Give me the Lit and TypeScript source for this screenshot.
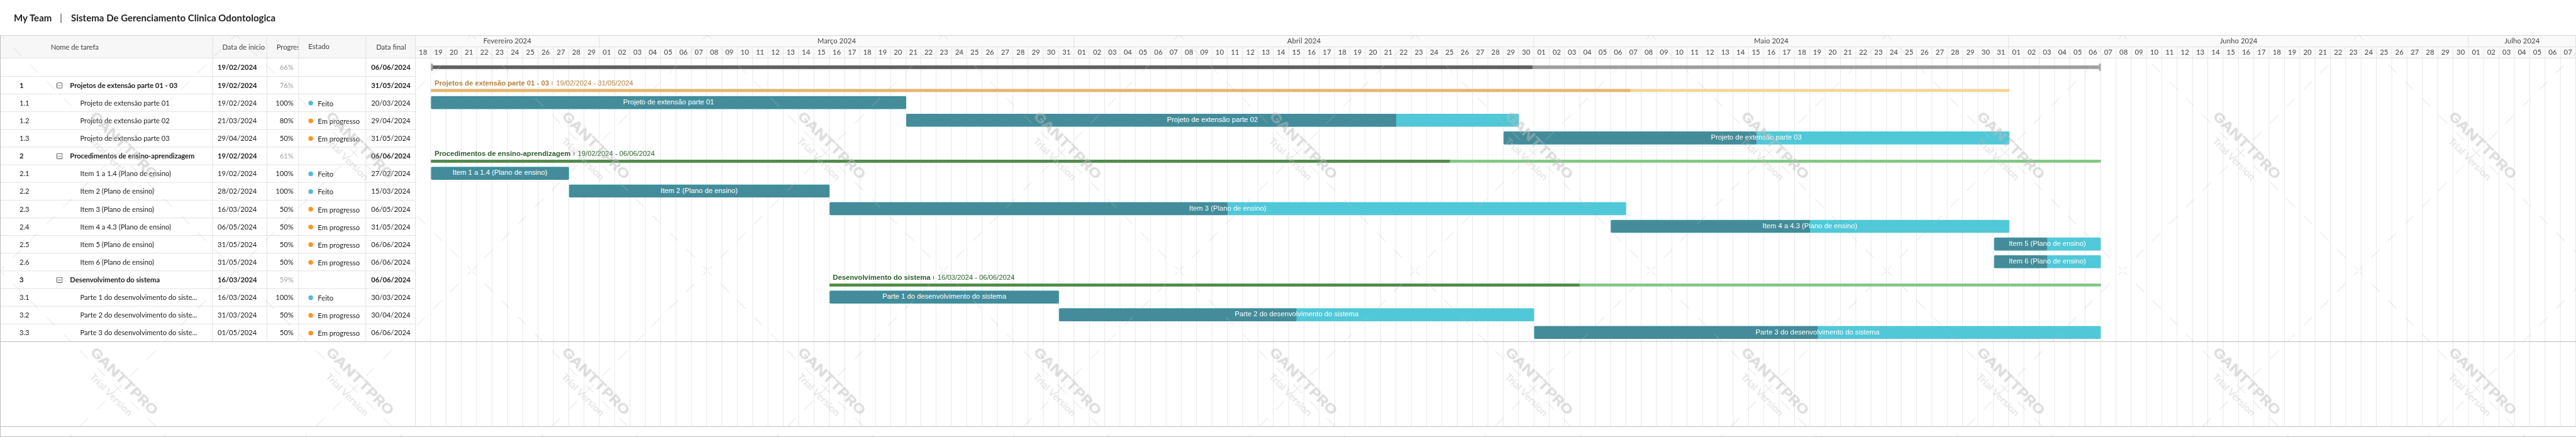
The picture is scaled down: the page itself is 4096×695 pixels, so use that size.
import { LitElement, html, svg, css, nothing } from "lit";
import { customElement } from "lit/decorators.js";
import { classMap } from "lit/directives/class-map.js";
import { styleMap } from "lit/directives/style-map.js";

type Kind = "root" | "group" | "task";
interface Row {
  kind: Kind;
  num: string;
  name: string;
  full?: string;
  start: string;
  end: string;
  progress: number;
  tone?: "orange" | "green";
}

const g = (num: string, name: string, start: string, end: string, progress: number, tone: "orange" | "green"): Row =>
  ({ kind: "group", num, name, start, end, progress, tone });
const t = (num: string, name: string, start: string, end: string, progress: number, full?: string): Row =>
  ({ kind: "task", num, name, start, end, progress, full });

const ROWS: Row[] = [
  { kind: "root", num: "", name: "", start: "19/02/2024", end: "06/06/2024", progress: 66 },
  g("1", "Projetos de extensão parte 01 - 03", "19/02/2024", "31/05/2024", 76, "orange"),
  t("1.1", "Projeto de extensão parte 01", "19/02/2024", "20/03/2024", 100),
  t("1.2", "Projeto de extensão parte 02", "21/03/2024", "29/04/2024", 80),
  t("1.3", "Projeto de extensão parte 03", "29/04/2024", "31/05/2024", 50),
  g("2", "Procedimentos de ensino-aprendizagem", "19/02/2024", "06/06/2024", 61, "green"),
  t("2.1", "Item 1 a 1.4 (Plano de ensino)", "19/02/2024", "27/02/2024", 100),
  t("2.2", "Item 2 (Plano de ensino)", "28/02/2024", "15/03/2024", 100),
  t("2.3", "Item 3 (Plano de ensino)", "16/03/2024", "06/05/2024", 50),
  t("2.4", "Item 4 a 4.3 (Plano de ensino)", "06/05/2024", "31/05/2024", 50),
  t("2.5", "Item 5 (Plano de ensino)", "31/05/2024", "06/06/2024", 50),
  t("2.6", "Item 6 (Plano de ensino)", "31/05/2024", "06/06/2024", 50),
  g("3", "Desenvolvimento do sistema", "16/03/2024", "06/06/2024", 59, "green"),
  t("3.1", "Parte 1 do desenvolvimento do siste...", "16/03/2024", "30/03/2024", 100, "Parte 1 do desenvolvimento do sistema"),
  t("3.2", "Parte 2 do desenvolvimento do siste...", "31/03/2024", "30/04/2024", 50, "Parte 2 do desenvolvimento do sistema"),
  t("3.3", "Parte 3 do desenvolvimento do siste...", "01/05/2024", "06/06/2024", 50, "Parte 3 do desenvolvimento do sistema"),
];

const MONTHS = [
  { label: "Fevereiro 2024", from: 18, to: 29 },
  { label: "Março 2024", from: 1, to: 31 },
  { label: "Abril 2024", from: 1, to: 30 },
  { label: "Maio 2024", from: 1, to: 31 },
  { label: "Junho 2024", from: 1, to: 30 },
  { label: "Julho 2024", from: 1, to: 7 },
];
const DAYS = MONTHS.flatMap((m) =>
  Array.from({ length: m.to - m.from + 1 }, (_, i) => String(m.from + i).padStart(2, "0")),
);
const CHART_WIDTH = 3664;
const DAY = CHART_WIDTH / DAYS.length;
const ORIGIN = Date.UTC(2024, 1, 18);

const dayIndex = (date: string) => {
  const [d, m, y] = date.split("/").map(Number);
  return Math.round((Date.UTC(y, m - 1, d) - ORIGIN) / 86400000);
};
// A bar covers its end date in full.
const span = (row: Row) => {
  const from = dayIndex(row.start);
  const to = dayIndex(row.end) + 1;
  return { left: from * DAY, width: (to - from) * DAY };
};

@customElement("task-table")
export class TaskTable extends LitElement {
  static styles = css`
    :host {
      display: block;
      width: 704px;
      font: 12px/16px Lato, sans-serif;
      color: #222;
    }
    .row {
      display: grid;
      grid-template-columns: 360px 92px 54px 114px 84px;
      height: 30px;
    }
    .row.root { height: 31px; }
    .row.head { height: 38px; background: #f7f7f7; color: #444; }
    .cell {
      display: flex;
      align-items: center;
      box-sizing: border-box;
      border-right: 1px solid #e0e0e0;
      border-bottom: 1px solid #e0e0e0;
      overflow: hidden;
      white-space: nowrap;
    }
    .row.last .cell { border-bottom-color: #b8b8b8; }
    .num { width: 62.8px; padding-left: 32px; }
    .toggle { display: block; width: 10px; height: 10px; margin-right: 13px; padding-top: 1px; }
    .indent { width: 40.2px; }
    .group .cell, .root .cell { font-weight: 700; }
    .group .name { letter-spacing: -0.06px; }
    .task .name { letter-spacing: -0.03px; }
    .start { padding-left: 8px; }
    .end { padding-left: 8.5px; }
    .pct { justify-content: flex-end; padding-right: 8px; }
    .group .pct, .root .pct { font-weight: 400; color: #a0a0a0; }
    .status { padding-left: 16px; }
    .dot {
      width: 8px;
      height: 8px;
      border-radius: 50%;
      background: #ff9620;
      margin-right: 8px;
    }
    .dot.done { background: #52bcd4; }
    .status span { padding-top: 2px; }
    .head .cell { padding-left: 16px; }
    .head .cell:first-child { padding-left: 85px; letter-spacing: -0.05px; }
    .head .status { padding-bottom: 2px; }
    .head .cell:last-child { padding-left: 17px; }
    .rest { height: 143px; border-right: 1px solid #e0e0e0; box-sizing: border-box; }
  `;
  render() {
    return html`
      <div class="row head">
        <div class="cell">Nome de tarefa</div>
        <div class="cell">Data de início</div>
        <div class="cell">Progresso</div>
        <div class="cell status">Estado</div>
        <div class="cell">Data final</div>
      </div>
      ${ROWS.map(
        (r, i) => html`<div class=${classMap({ row: true, [r.kind]: true, last: i === ROWS.length - 1 })}>
          <div class="cell">
            <div class="num">${r.num}</div>
            ${r.kind === "group"
              ? html`<svg class="toggle" viewBox="0 0 10 10">
                  <rect x="0.5" y="0.5" width="9" height="9" rx="1" fill="none" stroke="#333" />
                  <path d="M2.7 5h4.6" stroke="#888" stroke-width="1.2" />
                </svg>`
              : html`<div class="indent"></div>`}
            <div class="name">${r.name}</div>
          </div>
          <div class="cell start">${r.start}</div>
          <div class="cell pct">${r.progress}%</div>
          <div class="cell status">
            ${r.kind === "task"
              ? html`<div class=${classMap({ dot: true, done: r.progress === 100 })}></div>
                  <span>${r.progress === 100 ? "Feito" : "Em progresso"}</span>`
              : nothing}
          </div>
          <div class="cell end">${r.end}</div>
        </div>`,
      )}
      <div class="rest"></div>
    `;
  }
}

@customElement("gantt-chart")
export class GanttChart extends LitElement {
  static styles = css`
    :host {
      display: block;
      width: 3664px;
      font: 12px/16px Lato, sans-serif;
      color: #444;
    }
    .months, .days { display: flex; box-sizing: border-box; height: 19px; background: #fafafa; }
    .months > div, .days > div {
      box-sizing: border-box;
      display: flex;
      align-items: center;
      justify-content: center;
      border-right: 1px solid #e0e0e0;
      border-bottom: 1px solid #e0e0e0;
      min-width: 0;
      letter-spacing: 0.1px;
    }
    .days > div { flex: 1 1 0; border-right-color: #e8e8e8; }
    .body { display: grid; height: 624px; }
    .columns, .rows { grid-area: 1 / 1; }
    .columns { display: flex; }
    .columns > div { flex: 1 1 0; box-sizing: border-box; border-right: 1px solid #e6e6e6; }
    .row {
      height: 30px;
      box-sizing: border-box;
      font: 12px/20px "Liberation Sans", Arial, sans-serif;
      white-space: nowrap;
    }
    .row.root { height: 31px; padding-top: 9px; }
    .row.last { border-bottom: 1px solid #b8b8b8; }
    .row.task { padding-top: 3px; }
    .summary {
      display: flex;
      align-items: center;
      box-sizing: border-box;
      height: 12px;
      border: solid #9e9e9e;
      border-width: 0 3px;
    }
    .summary .track { flex: 1; height: 6px; background: #9e9e9e; }
    .summary .fill { height: 6px; background: #616161; }
    .label { display: flex; align-items: center; height: 21px; line-height: 22px; padding-left: 6px; }
    .label b { font-weight: 700; }
    .label i { width: 1px; height: 6px; margin: 0 6px 0 5px; background: currentColor; }
    .line { height: 5px; }
    .line div { height: 5px; }
    .orange { color: #b5823c; }
    .orange .line { background: #fad394; }
    .orange .line div { background: #e6b570; }
    .green { color: #2c5f2e; }
    .green .line { background: #81c784; }
    .green .line div { background: #528a4c; }
    .bar {
      display: grid;
      height: 22px;
      border-radius: 2px;
      background: #50c8d8;
      overflow: hidden;
      color: #fff;
    }
    .bar div { grid-area: 1 / 1; }
    .bar .done { background: #448c9a; border-radius: 2px; }
    .bar .text { text-align: center; }
  `;
  private content(r: Row) {
    const { left, width } = span(r);
    const box = styleMap({ marginLeft: `${left}px`, width: `${width}px` });
    const done = styleMap({ width: `${r.progress}%` });
    if (r.kind === "root")
      return html`<div class="summary" style=${box}>
        <div class="track"><div class="fill" style=${done}></div></div>
      </div>`;
    if (r.kind === "group")
      return html`<div class=${r.tone!} style=${box}>
        <div class="label"><b>${r.name}</b><i></i><span>${r.start} - ${r.end}</span></div>
        <div class="line"><div style=${done}></div></div>
      </div>`;
    return html`<div class="bar" style=${box}>
      <div class="done" style=${done}></div>
      <div class="text">${r.full ?? r.name}</div>
    </div>`;
  }
  render() {
    return html`
      <div class="months">
        ${MONTHS.map(
          (m) => html`<div style=${styleMap({ width: `${(m.to - m.from + 1) * DAY}px` })}>${m.label}</div>`,
        )}
      </div>
      <div class="days">${DAYS.map((d) => html`<div>${d}</div>`)}</div>
      <div class="body">
        <div class="columns">${DAYS.map(() => html`<div></div>`)}</div>
        <div class="rows">
          ${ROWS.map(
            (r, i) => html`<div class=${classMap({ row: true, [r.kind]: true, last: i === ROWS.length - 1 })}>
              ${this.content(r)}
            </div>`,
          )}
        </div>
      </div>
    `;
  }
}

@customElement("trial-watermark")
export class TrialWatermark extends LitElement {
  static styles = css`
    :host { display: block; pointer-events: none; }
    svg { display: block; }
    .dash { fill: none; stroke: rgba(195, 195, 195, 0.36); stroke-width: 1.2; }
    .brand {
      font: 600 21.5px Inter, sans-serif;
      fill: #bcbcbc;
      stroke: #bcbcbc;
      stroke-width: 0.6;
      stroke-linejoin: round;
      opacity: 0.5;
    }
    .trial {
      font: 400 17.2px Lato, sans-serif;
      fill: #bcbcbc;
      stroke: #bcbcbc;
      stroke-width: 0.2;
      opacity: 0.45;
    }
  `;
  render() {
    const tiles = [0, 1].flatMap((y) => Array.from({ length: 11 }, (_, x) => ({ x: x * 400, y: y * 400 - 1 })));
    return html`<svg width="4369" height="681" viewBox="0 0 4369 681">
      ${tiles.map(
        ({ x, y }) => svg`<g transform="translate(${x} ${y})">
          <path class="dash" pathLength="397" stroke-dasharray="14.2 14.3" stroke-dashoffset="8"
            d="M1.5 1.5L398.5 398.5" />
          <path class="dash" pathLength="397" stroke-dasharray="14.2 14.3" stroke-dashoffset="8"
            d="M398.5 1.5L1.5 398.5" />
          <g transform="rotate(45)">
            <text class="brand" transform="translate(205.8 -8.2) scale(1.28 1)" textLength="118.5">GANTTPRO</text>
            <text class="trial" x="235.5" y="21" textLength="94">Trial Version</text>
          </g>
        </g>`,
      )}
    </svg>`;
  }
}

@customElement("app-root")
export class AppRoot extends LitElement {
  static styles = css`
    :host {
      display: block;
      width: 4096px;
      height: 695px;
      overflow: hidden;
      background: #fff;
    }
    .page {
      width: 4369px;
      height: 741px;
      transform: scale(0.93752);
      transform-origin: 0 0;
    }
    header {
      display: flex;
      align-items: center;
      height: 60px;
      padding-left: 23.5px;
      font: 700 16px/20px Lato, sans-serif;
      letter-spacing: 0.04px;
      color: #222;
    }
    .sep { width: 1.5px; height: 16px; margin: 2px 16px 0 15px; background: #222; }
    .sheet {
      position: relative;
      box-sizing: border-box;
      height: 681px;
      border: solid #b8b8b8;
      border-width: 1px 0 1px 1px;
      border-top-color: #c8c8c8;
    }
    .panes { display: flex; height: 662px; border-bottom: 1px solid #b8b8b8; }
    task-table, gantt-chart { flex: none; }
    trial-watermark { position: absolute; top: -1px; left: -1px; }
  `;
  render() {
    return html`<div class="page">
      <header>
        <span>My Team</span>
        <div class="sep"></div>
        <span>Sistema De Gerenciamento Clinica Odontologica</span>
      </header>
      <div class="sheet">
        <div class="panes">
          <task-table></task-table>
          <gantt-chart></gantt-chart>
        </div>
        <trial-watermark></trial-watermark>
      </div>
    </div>`;
  }
}
